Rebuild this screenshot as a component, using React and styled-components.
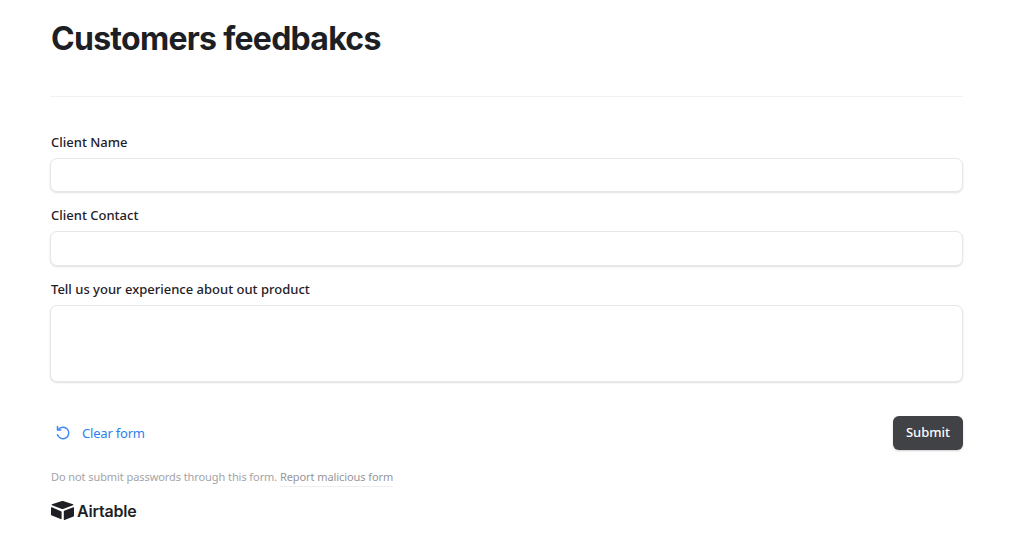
import React from 'react';
import styled, { createGlobalStyle } from 'styled-components';

const Global = createGlobalStyle`
  html, body { margin: 0; padding: 0; background: #fff; height: 100%; overflow: hidden; }
  * { box-sizing: border-box; }
`;

const Page = styled.div`
  width: 1024px;
  height: 549px;
  padding: 0 61px 0 50px;
  font-family: "Noto Sans", "Open Sans", sans-serif;
  color: #1f2128;
`;

const Title = styled.h1`
  margin: 0;
  padding: 19px 0 0 1px;
  height: 97px;
  font: 700 32px/40px Inter, sans-serif;
  letter-spacing: -0.72px;
  color: #1d1f25;
  border-bottom: 1px solid #f1f1f2;
`;

const Form = styled.form`
  display: flex;
  flex-direction: column;
  padding-top: 35.6px;
`;

const Field = styled.div`
  display: flex;
  flex-direction: column;
  margin-bottom: 14px;
`;

const Label = styled.label`
  font-size: 13px;
  font-weight: 500;
  line-height: 19px;
  height: 25px;
  padding-left: 1px;
  color: #1f2128;
`;

const Input = styled.div`
  height: ${p => p.$h}px;
  border-radius: 7px;
  border: 1px solid #e7e7e9;
  box-shadow: 0 1px 2px rgba(0, 0, 0, 0.12);
  background: #fff;
`;

const Actions = styled.div`
  display: flex;
  justify-content: space-between;
  align-items: center;
  margin-top: 20.4px;
`;

const Clear = styled.button`
  display: flex;
  align-items: center;
  gap: 11px;
  border: 0;
  background: none;
  padding: 0 0 0 5px;
  font: 400 13px/20px "Noto Sans", sans-serif;
  letter-spacing: -0.2px;
  color: #2d7ff0;
`;

const Submit = styled.button`
  width: 70px;
  height: 34px;
  border: 0;
  padding: 0 0 2px;
  border-radius: 6px;
  background: #414245;
  color: #fff;
  font: 500 13px/20px "Noto Sans", sans-serif;
  box-shadow: 0 1px 2px rgba(0, 0, 0, 0.2);
`;

const Note = styled.p`
  margin: 18px 0 0;
  padding-left: 1px;
  font-size: 11px;
  line-height: 18px;
  letter-spacing: -0.08px;
  color: #a3a3a6;
`;

const ReportLink = styled.a`
  display: inline-block;
  color: #96969a;
  border-bottom: 1px solid #eeeeef;
`;

const Brand = styled.div`
  display: flex;
  align-items: center;
  gap: 3px;
  margin-top: 14px;
  padding-left: 1px;
  font: 600 16px/20px Inter, sans-serif;
  letter-spacing: -0.2px;
  color: #1d1f25;
`;

const Undo = () => (
  <svg width="16" height="16" viewBox="0 0 16 16" fill="none" stroke="#3b88f2" strokeWidth="1.5" strokeLinecap="round" strokeLinejoin="round">
    <path d="M3.4 4.4A5.8 5.8 0 1 1 2.500 9.800" />
    <path d="M2.500 1.600V4.900H5.800" />
  </svg>
);

const Logo = () => (
  <svg width="23" height="19" viewBox="0 0 23 19">
    <path fill="#1d1f25" d="M10.2.3 1 3.2c-.5.2-.5.8 0 1l9.3 3.6c.8.3 1.6.3 2.4 0L22 4.2c.5-.2.5-.8 0-1L12.8.3c-.8-.3-1.8-.3-2.600 0Z" />
    <path fill="#1d1f25" d="M12.8 10.300v8.100c0 .4.4.6.7.5l9-3.500c.3-.1.5-.4.5-.7V6.700c0-.4-.4-.6-.7-.5l-9 3.500c-.3.1-.5.3-.5.600Z" />
    <path fill="#1d1f25" d="M10.400 10.500 1 6.200C.5 6 0 6.300 0 6.800v7c0 .2.1.4.3.5l9.300 3.800c.5.2 1-.1 1-.6v-6.600c0-.2 0-.3-.2-.4Z" />
  </svg>
);

export default function App() {
  return (
    <Page>
      <Global />
      <Title>Customers feedbakcs</Title>
      <Form>
        <Field>
          <Label>Client Name</Label>
          <Input $h={34.6} />
        </Field>
        <Field>
          <Label>Client Contact</Label>
          <Input $h={34.6} />
        </Field>
        <Field>
          <Label>Tell us your experience about out product</Label>
          <Input $h={76.8} />
        </Field>
        <Actions>
          <Clear type="button"><Undo />Clear form</Clear>
          <Submit type="button">Submit</Submit>
        </Actions>
        <Note>Do not submit passwords through this form. <ReportLink>Report malicious form</ReportLink></Note>
        <Brand><Logo />Airtable</Brand>
      </Form>
    </Page>
  );
}
